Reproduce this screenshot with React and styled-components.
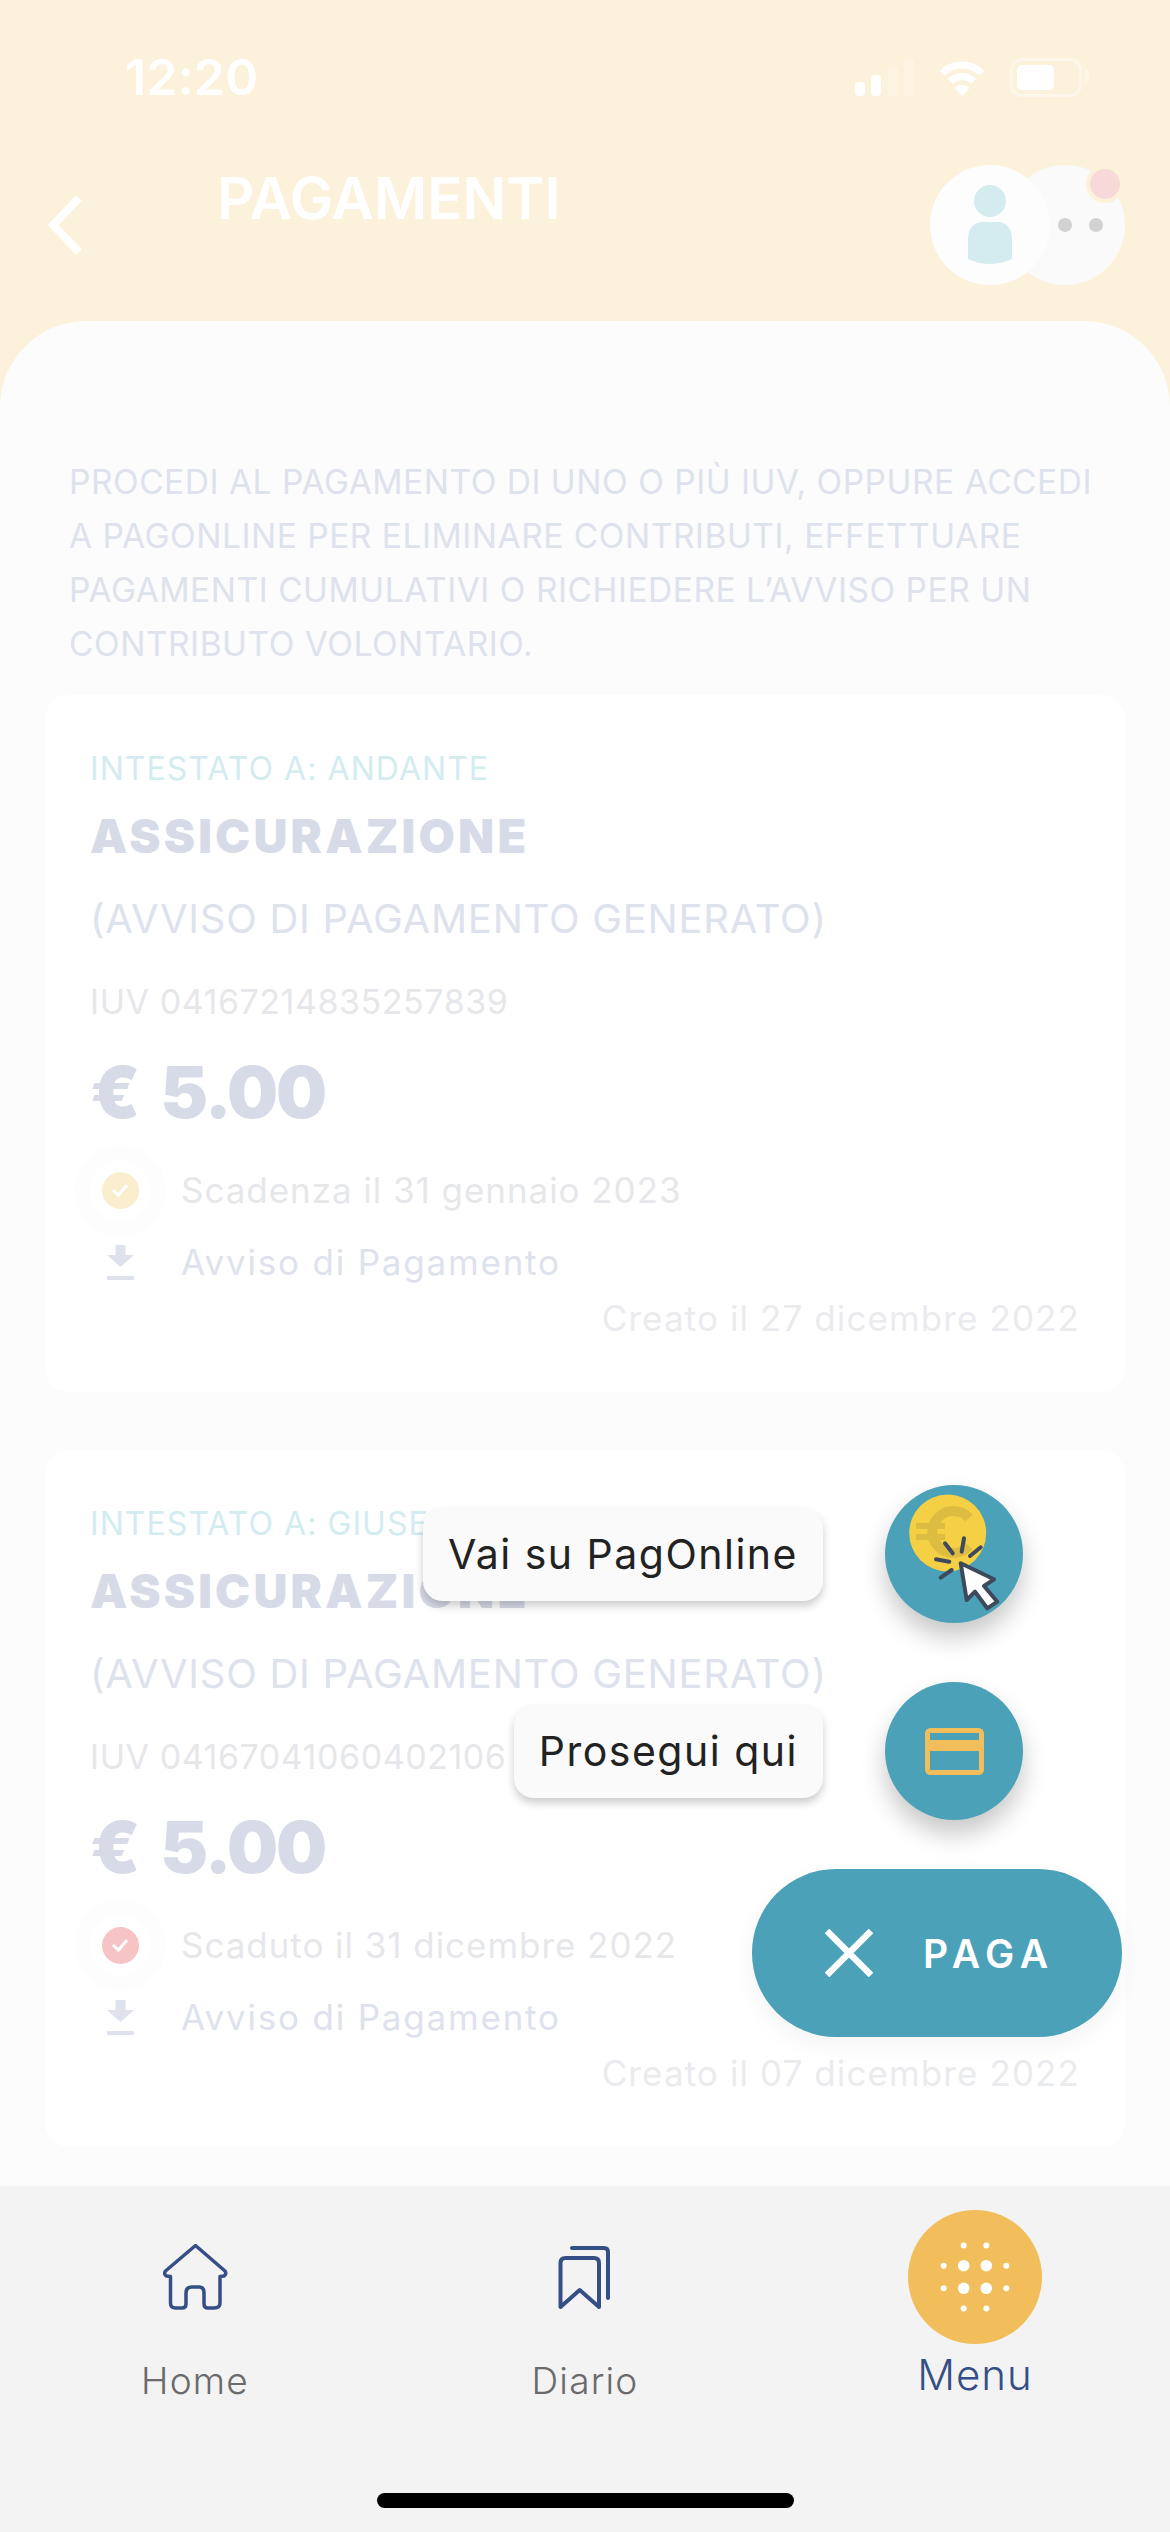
import React from 'react';
import styled, { createGlobalStyle } from 'styled-components';

const FONT = `Inter, 'Noto Sans', sans-serif`;

const COLORS = {
  header: '#fcf1db',
  sheet: '#fcfcfc',
  teal: '#4aa1b8',
  orange: '#f2bd5b',
  navy: '#354f86',
  lavender: '#d7dbe7',
  lavenderLight: '#dee2ec',
  gray: '#e6e7ea',
  grayLight: '#eaebee',
  aqua: '#d3ecf0',
};

const GlobalStyle = createGlobalStyle`
  html, body {
    margin: 0;
    padding: 0;
    background: ${COLORS.sheet};
  }
  * {
    box-sizing: border-box;
  }
`;

const Page = styled.div`
  position: relative;
  display: flex;
  flex-direction: column;
  width: 1170px;
  height: 2532px;
  overflow: hidden;
  background: ${COLORS.header};
  font-family: ${FONT};
`;

const Header = styled.header`
  height: 321px;
  padding-top: 59px;
  color: #fff;
`;

const StatusBar = styled.div`
  display: flex;
  align-items: center;
  height: 37px;
  padding: 0 88px 0 125px;
`;

const Time = styled.span`
  font-size: 50px;
  line-height: 37px;
  font-weight: 600;
  letter-spacing: 0.2px;
`;

const StatusIcons = styled.div`
  display: flex;
  align-items: center;
  gap: 23px;
  margin-left: auto;
`;

const Signal = styled.div`
  display: flex;
  align-items: flex-end;
  gap: 6.5px;
  height: 37px;
`;

const SignalBar = styled.span`
  width: 10px;
  height: ${(p) => p.$h}px;
  border-radius: 4px;
  background: ${(p) => (p.$on ? '#fff' : 'rgba(255,255,255,.25)')};
`;

const Battery = styled.div`
  position: relative;
  width: 72px;
  height: 39px;
  padding: 4px;
  border: 3px solid rgba(255, 255, 255, 0.45);
  border-radius: 12px;
`;

const BatteryFill = styled.div`
  width: 37px;
  height: 100%;
  border-radius: 5px;
  background: #fff;
`;

const BatteryNub = styled.span`
  position: absolute;
  top: 8px;
  right: -10px;
  width: 4px;
  height: 14px;
  border-radius: 2px;
  background: rgba(255, 255, 255, 0.45);
`;

const TitleRow = styled.div`
  display: flex;
  height: 120px;
  margin-top: 69px;
  padding: 0 45px 0 48px;
`;

const BackIcon = styled.svg`
  flex: none;
  width: 34px;
  height: 60px;
  margin-top: 30px;
`;

const Title = styled.h1`
  margin: 0 0 0 135px;
  font-size: 58px;
  line-height: 66px;
  font-weight: 600;
  letter-spacing: 0;
`;

const Avatars = styled.div`
  display: flex;
  margin-left: auto;
`;

const Avatar = styled.div`
  position: relative;
  display: flex;
  align-items: center;
  justify-content: center;
  gap: 17px;
  width: 120px;
  height: 120px;
  border-radius: 50%;
  background: #fdfdfd;
  z-index: 1;
`;

const MoreAvatar = styled(Avatar)`
  margin-left: -45px;
  padding-left: 31px;
  background: #fafafa;
  z-index: 0;
`;

const MoreDot = styled.span`
  width: 14px;
  height: 14px;
  border-radius: 50%;
  background: #d2d2d2;
`;

const Badge = styled.span`
  position: absolute;
  top: 0;
  right: 1px;
  width: 38px;
  height: 38px;
  border: 4px solid ${COLORS.header};
  border-radius: 50%;
  background: #f6d9d8;
`;

const Sheet = styled.main`
  flex: 1;
  min-height: 0;
  overflow: hidden;
  padding: 134px 45px 0;
  border-radius: 86px 86px 0 0;
  background: ${COLORS.sheet};
`;

const Intro = styled.p`
  margin: 0 0 24px;
  padding-left: 24px;
  font-size: 33.5px;
  line-height: 54px;
  color: ${COLORS.lavenderLight};
  white-space: nowrap;
  letter-spacing: 0.52px;
`;

const Cards = styled.div`
  display: flex;
  flex-direction: column;
  gap: 58px;
`;

const Card = styled.article`
  height: 697px;
  padding: 51px 45px 0;
  border-radius: 24px;
  background: #fff;
  box-shadow: 0 0 12px rgba(0, 0, 0, 0.006);
`;

const Owner = styled.div`
  font-size: 32px;
  line-height: 46px;
  color: ${COLORS.aqua};
  white-space: nowrap;
  letter-spacing: 1.05px;
`;

const CardTitle = styled.h2`
  margin: 0;
  font-size: 47px;
  line-height: 88px;
  font-weight: 900;
  letter-spacing: 3.2px;
  color: ${COLORS.lavender};
`;

const Subtitle = styled.div`
  font-size: 40px;
  line-height: 77px;
  color: ${COLORS.lavenderLight};
  white-space: nowrap;
  letter-spacing: 0.75px;
`;

const Iuv = styled.div`
  font-size: 34px;
  line-height: 89px;
  color: ${COLORS.gray};
  letter-spacing: 0.55px;
`;

const Amount = styled.div`
  font-size: 72px;
  line-height: 92px;
  font-weight: 900;
  letter-spacing: -2.2px;
  word-spacing: 10px;
  color: ${COLORS.lavender};
`;

const DueRow = styled.div`
  display: flex;
  align-items: center;
  gap: 31px;
  height: 104px;
`;

const IconSlot = styled.div`
  display: flex;
  flex: none;
  align-items: center;
  justify-content: center;
  width: 60px;
`;

const DueDot = styled.span`
  display: flex;
  align-items: center;
  justify-content: center;
  width: 37px;
  height: 37px;
  border-radius: 50%;
  background: ${(p) => p.$color};
  box-shadow: 0 0 0 12px #fff, 0 0 0 27px #fdfdfd;
`;

const DueText = styled.span`
  font-size: 35px;
  color: ${COLORS.gray};
  letter-spacing: 0.95px;
`;

const NoticeRow = styled.div`
  display: flex;
  align-items: center;
  gap: 31px;
  height: 34px;
  margin-top: 3px;
`;

const NoticeText = styled.span`
  font-size: 35px;
  color: ${COLORS.lavenderLight};
  letter-spacing: 1.8px;
`;

const Created = styled.div`
  font-size: 35px;
  line-height: 78px;
  text-align: right;
  color: ${COLORS.grayLight};
  letter-spacing: 1.1px;
`;

const FabStack = styled.div`
  position: absolute;
  right: 48px;
  bottom: 495px;
  display: flex;
  flex-direction: column;
  align-items: flex-end;
`;

const FabRow = styled.div`
  display: flex;
  align-items: center;
  gap: 62px;
  margin: 0 99px 59px 0;

  &:nth-child(2) {
    margin-bottom: 49px;
  }
`;

const Tooltip = styled.div`
  display: flex;
  align-items: center;
  height: 93px;
  padding: 0 25px;
  border-radius: 20px;
  background: #fafafa;
  box-shadow: 0 5px 8px rgba(0, 0, 0, 0.2);
  font-size: 41px;
  letter-spacing: 1.5px;
  color: #222;
  white-space: nowrap;
`;

const RoundFab = styled.button`
  display: flex;
  align-items: center;
  justify-content: center;
  width: 138px;
  height: 138px;
  padding: 0;
  border: 0;
  border-radius: 50%;
  background: ${COLORS.teal};
  box-shadow: 0 14px 24px rgba(0, 0, 0, 0.22);
`;

const PayFab = styled.button`
  display: flex;
  align-items: center;
  gap: 50px;
  width: 370px;
  height: 168px;
  padding: 0 0 0 73px;
  border: 0;
  border-radius: 84px;
  background: ${COLORS.teal};
  box-shadow: 0 8px 24px rgba(0, 0, 0, 0.05);
  font-family: ${FONT};
  font-size: 39px;
  font-weight: 600;
  letter-spacing: 6.6px;
  color: #fff;
`;

const TabBar = styled.nav`
  display: grid;
  position: relative;
  grid-template-columns: repeat(3, 1fr);
  height: 346px;
  background: #f3f3f3;
`;

const Tab = styled.div`
  display: flex;
  flex-direction: column;
  align-items: center;
  padding-top: 58px;
`;

const TabLabel = styled.span`
  margin-top: 46px;
  font-size: 37px;
  line-height: 50px;
  font-weight: 300;
  letter-spacing: 1.2px;
  color: #6a6a6a;
`;

const ActiveTab = styled(Tab)`
  padding-top: 24px;
`;

const MenuCircle = styled.div`
  display: flex;
  align-items: center;
  justify-content: center;
  width: 134px;
  height: 134px;
  border-radius: 50%;
  background: ${COLORS.orange};
`;

const ActiveLabel = styled.span`
  margin-top: 6px;
  font-size: 42px;
  line-height: 50px;
  font-weight: 300;
  letter-spacing: 1px;
  color: ${COLORS.navy};
`;

const HomeIndicator = styled.div`
  position: absolute;
  left: 377px;
  bottom: 24px;
  width: 417px;
  height: 15px;
  border-radius: 8px;
  background: #000;
`;

const WifiIcon = () => (
  <svg width="50" height="37" viewBox="0 0 50 37" fill="none">
    <path d="M5.2 14.2a28 28 0 0 1 39.6 0" stroke="#fff" strokeWidth="7" />
    <path d="M13.3 22.3a16.5 16.5 0 0 1 23.4 0" stroke="#fff" strokeWidth="7" />
    <path d="M25 37l-7.5-8q7.5-6.5 15 0z" fill="#fff" />
  </svg>
);

const PersonIcon = () => (
  <svg width="44" height="80" viewBox="0 0 44 80" fill="#d4ecf0">
    <circle cx="22" cy="16" r="16" />
    <path d="M0 53c0-9 6-16 14-16h16c8 0 14 7 14 16v21q-22 10-44 0z" />
  </svg>
);

const CheckIcon = () => (
  <svg width="20" height="16" viewBox="0 0 20 16" fill="none">
    <path d="M3 8l5.5 5L17 3" stroke="#fff" strokeWidth="3" />
  </svg>
);

const DownloadIcon = () => (
  <svg width="27" height="35" viewBox="0 0 27 35" fill={COLORS.lavenderLight}>
    <path d="M8.5 0h10v10h8.500L13.500 22 0 10h8.500z" />
    <rect y="31" width="27" height="4" />
  </svg>
);

const CoinClickIcon = () => (
  <svg width="138" height="138" viewBox="0 0 138 138" fill="none">
    <circle cx="62.700" cy="48" r="38.500" fill="#f6d044" />
    <path d="M84 33a21 21 0 1 0 0 28" stroke="#ddbc42" strokeWidth="10" />
    <path d="M31 41h29M31 52h29" stroke="#ddbc42" strokeWidth="6" />
    <path
      d="M60 58.300l7.700 10M79 53.300l-2.300 13.400M95.700 62.300L85 71M51 74.300l13.300 2.400M66.700 85l-11 7.700"
      stroke="#3d4a5c"
      strokeWidth="4"
      strokeLinecap="round"
    />
    <path
      d="M75.700 78.300L109 94.300 99 101l13.300 15.700-10 6.600L90 106.700 81.700 115z"
      fill="#fff"
      stroke="#3d4a5c"
      strokeWidth="4"
      strokeLinejoin="round"
    />
  </svg>
);

const CardIcon = () => (
  <svg width="59" height="47" viewBox="0 0 59 47" fill="none">
    <rect x="2.500" y="2.500" width="54" height="42" rx="3" stroke={COLORS.orange} strokeWidth="5" />
    <rect x="2.500" y="12" width="54" height="11" fill={COLORS.orange} />
  </svg>
);

const HomeIcon = () => (
  <svg width="65" height="66" viewBox="0 0 65 66" fill="none">
    <path
      d="M32.500 1.500L2.500 27q-2 3 1 5l4 .5V59q0 5 5 5H19q4 0 4-4V49q0-6 6-6h7q5 0 5 6v11q0 4 4 4h6q6 0 6-5V32.500l4-.5q3-2 1-5z"
      stroke={COLORS.navy}
      strokeWidth="3.500"
      strokeLinejoin="round"
    />
  </svg>
);

const BookmarkIcon = () => (
  <svg width="56" height="66" viewBox="0 0 56 66" fill="none" stroke={COLORS.navy} strokeWidth="4">
    <path d="M3.500 63V19q0-5 5-5H37q5 0 5 5v44L22.700 46z" strokeLinejoin="round" />
    <path d="M15 4h32q4 0 4 4v46" strokeLinecap="round" />
  </svg>
);

const MenuDots = () => {
  const big = [[-11.3, -11.3], [11.3, -11.3], [-11.3, 11.3], [11.3, 11.3]];
  const small = [
    [-11.3, -31.5], [11.3, -31.5], [-31.3, -11.3], [31.3, -11.3],
    [-31.3, 11.3], [31.3, 11.3], [-11.3, 31.5], [11.3, 31.5],
  ];
  return (
    <svg width="80" height="80" viewBox="-40 -40 80 80" fill="#fff">
      {big.map(([x, y]) => <circle key={`${x}${y}`} cx={x} cy={y} r="5.800" />)}
      {small.map(([x, y]) => <circle key={`${x}${y}`} cx={x} cy={y} r="3" />)}
    </svg>
  );
};

const PAYMENTS = [
  {
    owner: 'INTESTATO A: ANDANTE',
    iuv: 'IUV 04167214835257839',
    due: 'Scadenza il 31 gennaio 2023',
    dueColor: '#fbeecf',
    created: 'Creato il 27 dicembre 2022',
  },
  {
    owner: 'INTESTATO A: GIUSEPPE',
    iuv: 'IUV 04167041060402106',
    due: 'Scaduto il 31 dicembre 2022',
    dueColor: '#f6c4c4',
    created: 'Creato il 07 dicembre 2022',
  },
];

const App = () => (
  <Page>
    <GlobalStyle />
    <Header>
      <StatusBar>
        <Time>12:20</Time>
        <StatusIcons>
          <Signal>
            <SignalBar $h={14} $on />
            <SignalBar $h={21} $on />
            <SignalBar $h={29} />
            <SignalBar $h={37} />
          </Signal>
          <WifiIcon />
          <Battery>
            <BatteryFill />
            <BatteryNub />
          </Battery>
        </StatusIcons>
      </StatusBar>
      <TitleRow>
        <BackIcon viewBox="0 0 34 60" fill="none">
          <path d="M31 3L5 30l26 27" stroke="#fff" strokeWidth="8" />
        </BackIcon>
        <Title>PAGAMENTI</Title>
        <Avatars>
          <Avatar>
            <PersonIcon />
          </Avatar>
          <MoreAvatar>
            <MoreDot />
            <MoreDot />
            <Badge />
          </MoreAvatar>
        </Avatars>
      </TitleRow>
    </Header>

    <Sheet>
      <Intro>
        PROCEDI AL PAGAMENTO DI UNO O PIÙ IUV, OPPURE ACCEDI
        <br />
        A PAGONLINE PER ELIMINARE CONTRIBUTI, EFFETTUARE
        <br />
        PAGAMENTI CUMULATIVI O RICHIEDERE L’AVVISO PER UN
        <br />
        CONTRIBUTO VOLONTARIO.
      </Intro>
      <Cards>
        {PAYMENTS.map((item) => (
          <Card key={item.iuv}>
            <Owner>{item.owner}</Owner>
            <CardTitle>ASSICURAZIONE</CardTitle>
            <Subtitle>(AVVISO DI PAGAMENTO GENERATO)</Subtitle>
            <Iuv>{item.iuv}</Iuv>
            <Amount>€ 5.00</Amount>
            <DueRow>
              <IconSlot>
                <DueDot $color={item.dueColor}>
                  <CheckIcon />
                </DueDot>
              </IconSlot>
              <DueText>{item.due}</DueText>
            </DueRow>
            <NoticeRow>
              <IconSlot>
                <DownloadIcon />
              </IconSlot>
              <NoticeText>Avviso di Pagamento</NoticeText>
            </NoticeRow>
            <Created>{item.created}</Created>
          </Card>
        ))}
      </Cards>
    </Sheet>

    <TabBar>
      <Tab>
        <HomeIcon />
        <TabLabel>Home</TabLabel>
      </Tab>
      <Tab>
        <BookmarkIcon />
        <TabLabel>Diario</TabLabel>
      </Tab>
      <ActiveTab>
        <MenuCircle>
          <MenuDots />
        </MenuCircle>
        <ActiveLabel>Menu</ActiveLabel>
      </ActiveTab>
      <HomeIndicator />
    </TabBar>

    <FabStack>
      <FabRow>
        <Tooltip>Vai su PagOnline</Tooltip>
        <RoundFab>
          <CoinClickIcon />
        </RoundFab>
      </FabRow>
      <FabRow>
        <Tooltip>Prosegui qui</Tooltip>
        <RoundFab>
          <CardIcon />
        </RoundFab>
      </FabRow>
      <PayFab>
        <svg width="48" height="48" viewBox="0 0 48 48" fill="none">
          <path d="M2 2l44 44M46 2L2 46" stroke="#fff" strokeWidth="6.500" />
        </svg>
        PAGA
      </PayFab>
    </FabStack>
  </Page>
);

export default App;
